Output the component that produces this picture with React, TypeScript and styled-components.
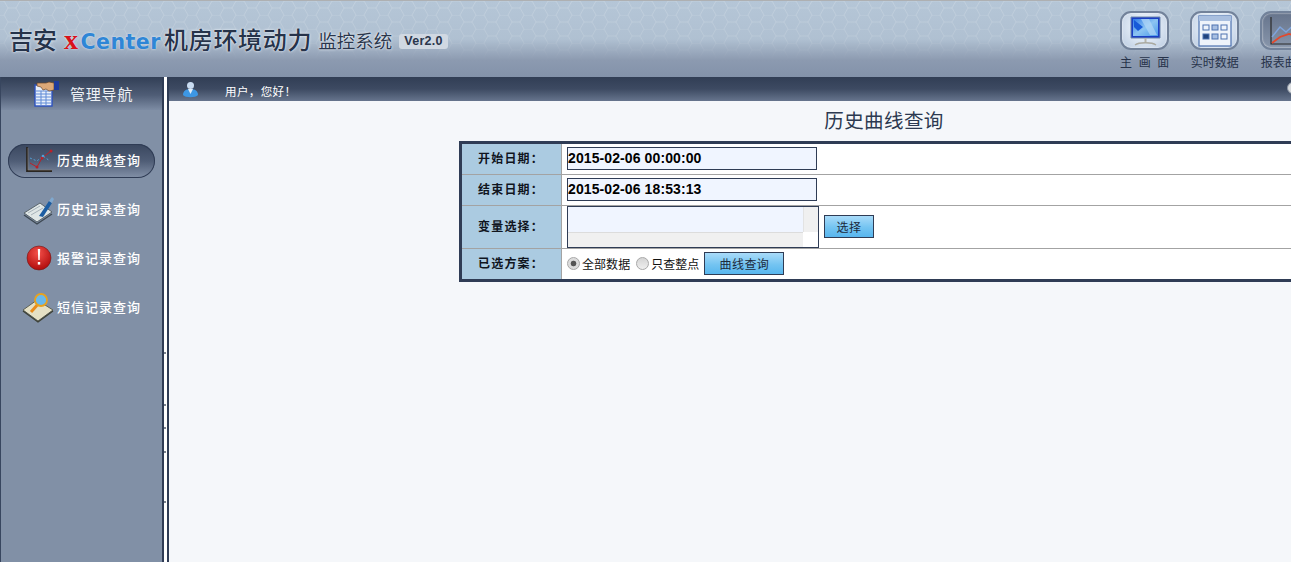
import styled, { createGlobalStyle } from "styled-components";

const hexTile = encodeURIComponent(
    `<svg xmlns="http://www.w3.org/2000/svg" width="24" height="14"><path d="M0 0l4 0 4 7 8 0 4-7 4 0M8 7l-4 7M16 7l4 7" fill="none" stroke="#ffffff" stroke-opacity=".17" stroke-width="1"/></svg>`
);

const GlobalStyle = createGlobalStyle`
    html, body {
        margin: 0;
        height: 100%;
        overflow: hidden;
        background: #f5f7fa;
    }
    body, input, button {
        font-family: "Liberation Sans", "Noto Sans CJK SC", sans-serif;
    }
`;

const Page = styled.div`
    width: 1291px;
    height: 562px;
    display: flex;
    flex-direction: column;
    overflow: hidden;
`;

const Header = styled.header`
    flex: 0 0 77px;
    box-sizing: border-box;
    border-top: 1px solid #aeb0b2;
    display: flex;
    justify-content: space-between;
    background:
        linear-gradient(180deg, rgba(181, 198, 214, 0) 0%, rgba(160, 176, 194, 0.25) 50%, #8c9ab0 78%, #8392aa 100%),
        url("data:image/svg+xml,${hexTile}"),
        #b5c6d7;
`;

const Brand = styled.div`
    display: flex;
    align-items: flex-start;
    padding: 22px 0 0 9px;
    color: #26334a;
    text-shadow: 0 0 3px #e8eef5, 0 0 1px #ffffff;
    white-space: nowrap;
`;

const BrandBig = styled.span<{ $spacing?: number }>`
    font-family: "Noto Sans CJK SC", sans-serif;
    font-size: 24px;
    font-weight: 500;
    line-height: 32px;
    letter-spacing: ${(p) => p.$spacing ?? 0}px;
`;

const Logo = styled.span`
    width: 100px;
    font-family: "DejaVu Sans", "Liberation Sans", sans-serif;
    font-size: 20.5px;
    font-weight: 700;
    line-height: 33px;
    margin: 0 0 0 7px;
    letter-spacing: 0.5px;
    color: #2f86d6;
    text-shadow: 0 0 2px #e8eef5;

    b {
        font-family: "Liberation Serif", serif;
        font-size: 28px;
        font-weight: 700;
        color: #d8121a;
        margin-right: 2px;
    }
`;

const SubTitle = styled.span`
    font-family: "Noto Sans CJK SC", sans-serif;
    font-size: 18.5px;
    line-height: 34px;
    margin-left: 6px;
    color: #2a364c;
`;

const Version = styled.span`
    margin: 11px 0 0 7px;
    padding: 0 5px;
    height: 15px;
    line-height: 15px;
    border-radius: 3px;
    background: #d0d8e2;
    color: #2a364c;
    font-size: 12.5px;
    font-weight: 700;
    letter-spacing: 0.3px;
    text-shadow: none;
`;

const Toolbar = styled.nav`
    display: flex;
    gap: 21px;
    padding: 10px 0 0 0;
    width: 171px;
    flex: 0 0 171px;
`;

const ToolItem = styled.div`
    flex: 0 0 49px;
    display: flex;
    flex-direction: column;
    align-items: center;
    gap: 6px;
    color: #27334a;
    font-size: 12px;
    line-height: 14px;
    white-space: nowrap;
`;

const ToolFace = styled.div<{ $active?: boolean }>`
    width: 49px;
    height: 39px;
    box-sizing: border-box;
    border-radius: 11px;
    border: 2px solid #72829a;
    display: flex;
    align-items: center;
    justify-content: center;
    background: ${(p) =>
        p.$active
            ? "linear-gradient(180deg, #66748c, #8896ab)"
            : "radial-gradient(ellipse at 50% 40%, #e8f0f9 30%, #b9cae0 100%)"};
    box-shadow: inset 0 0 2px #ffffff;
`;

const Body = styled.div`
    flex: 1;
    display: flex;
    min-height: 0;
`;

const Sidebar = styled.aside`
    flex: 0 0 164px;
    box-sizing: border-box;
    border-left: 1px solid #38465f;
    border-right: 2px solid #2f3c55;
    background: #8190a6;
    display: flex;
    flex-direction: column;
`;

const SideHead = styled.div`
    height: 33px;
    display: flex;
    align-items: center;
    gap: 10px;
    padding-left: 33px;
    color: #eef2f6;
    font-size: 15px;
    letter-spacing: 0.8px;
    background: linear-gradient(180deg, #323f56 0%, #4f5d76 55%, #7d8ca4 100%);
`;

const SideList = styled.ul`
    list-style: none;
    margin: 0;
    padding: 34px 0 0 7px;
    display: flex;
    flex-direction: column;
    gap: 15px;
`;

const SideItem = styled.li<{ $active?: boolean }>`
    width: 147px;
    height: 34px;
    box-sizing: border-box;
    padding-left: 14px;
    display: flex;
    align-items: center;
    gap: 3px;
    border-radius: 17px;
    color: #ffffff;
    font-size: 13px;
    font-weight: 500;
    letter-spacing: 1px;
    white-space: nowrap;
    ${(p) =>
        p.$active &&
        `
        background: linear-gradient(180deg, #3a475f 0%, #4f5d76 50%, #8391a8 100%);
        box-shadow: inset 0 0 0 1px #2f3c55;
    `}
`;

const SideText = styled.span`
    padding-bottom: 4px;
`;

const SideIcon = styled.svg`
    flex: 0 0 32px;
    width: 32px;
    height: 32px;
    margin-top: -3px;
`;

const Splitter = styled.div`
    flex: 0 0 3px;
    background: #ffffff;
    display: flex;
    flex-direction: column;
    padding-top: 275px;
`;

const Tick = styled.i<{ $top: number }>`
    display: block;
    width: 2px;
    height: 2px;
    margin-top: ${(p) => p.$top}px;
    background: #7c8490;
`;

const Main = styled.main`
    flex: 1;
    min-width: 0;
    box-sizing: border-box;
    border-left: 2px solid #2f3c55;
    display: flex;
    flex-direction: column;
    background: #f5f7fa;
    overflow: hidden;
`;

const UserBar = styled.div`
    flex: 0 0 24px;
    display: flex;
    align-items: center;
    padding-left: 14px;
    color: #ffffff;
    font-size: 11.5px;
    letter-spacing: 0.4px;
    background: linear-gradient(180deg, #313e55 0%, #3d4a62 50%, #66748d 100%);
    position: relative;
`;

const UserName = styled.span`
    margin-left: 27px;
    padding-top: 3px;
`;

const CloseDot = styled.span`
    position: absolute;
    left: 1118px;
    top: 5px;
    width: 10px;
    height: 10px;
    border-radius: 50%;
    background: #d9dcdf;
    border: 1px solid #8c95a3;
`;

const Content = styled.section`
    width: 1430px;
    display: flex;
    flex-direction: column;
    align-items: center;
`;

const Heading = styled.h1`
    margin: 5px 0 0;
    height: 35px;
    font-size: 19.5px;
    line-height: 28px;
    font-weight: 400;
    letter-spacing: 0.4px;
    color: #2c3950;
    font-family: "Noto Sans CJK SC", sans-serif;
`;

const QueryTable = styled.div`
    width: 850px;
    flex: 0 0 auto;
    box-sizing: border-box;
    border: 3px solid #2f3c55;
    background: #ffffff;
    display: flex;
    flex-direction: column;
`;

const Row = styled.div<{ $h: number; $last?: boolean }>`
    height: ${(p) => p.$h}px;
    display: flex;
    border-bottom: ${(p) => (p.$last ? "none" : "1px solid #a3a3a3")};
`;

const Label = styled.div`
    flex: 0 0 100px;
    border-right: 1px solid #a3a3a3;
    background: #abcbe1;
    display: flex;
    align-items: center;
    padding: 0 0 3px 16px;
    box-sizing: border-box;
    font-size: 12px;
    font-weight: 700;
    letter-spacing: 1.2px;
    color: #10151e;
`;

const Cell = styled.div<{ $flush?: boolean }>`
    flex: 1;
    display: flex;
    align-items: center;
    padding: 0 0 ${(p) => (p.$flush ? 0 : 2)}px 5px;
    font-size: 12px;
    color: #111;
`;

const DateInput = styled.input`
    width: 250px;
    height: 23px;
    box-sizing: border-box;
    border: 1px solid #2f3c55;
    background: #f0f5ff;
    padding: 0;
    font-family: "Liberation Sans", sans-serif;
    font-size: 14px;
    font-weight: 700;
    letter-spacing: 0.1px;
    color: #000;
    outline: none;
`;

const ListBox = styled.div`
    width: 252px;
    height: 42px;
    box-sizing: border-box;
    border: 1px solid #2f3c55;
    display: grid;
    grid-template-columns: 1fr 15px;
    grid-template-rows: 1fr 15px;
    background: #ffffff;
`;

const ListArea = styled.div`
    background: #f0f5ff;
`;

const ScrollTrack = styled.div`
    background: #f0f0f0;
    border-left: 1px solid #e3e3e3;
`;

const ScrollBottom = styled.div`
    background: #f0f0f0;
    border-top: 1px solid #dcdcdc;
`;

const BlueButton = styled.button<{ $w: number; $gap?: number; $lift?: number }>`
    width: ${(p) => p.$w}px;
    height: 23px;
    margin-left: ${(p) => p.$gap ?? 0}px;
    margin-bottom: ${(p) => p.$lift ?? 0}px;
    padding: 0;
    box-sizing: border-box;
    border: 1px solid #2f3c55;
    background: linear-gradient(180deg, #a9dbf9 0%, #74c4f1 55%, #58b6ee 100%);
    color: #1c2a3c;
    font-size: 12px;
    letter-spacing: 0.4px;
`;

const RadioGroup = styled.label`
    display: flex;
    align-items: center;
    gap: 2px;
    margin-right: 5px;
    color: #111;
    letter-spacing: 0.05px;

    & + & {
        margin-left: 1px;
    }
`;

const RadioDot = styled.span<{ $on?: boolean }>`
    width: 13px;
    height: 13px;
    box-sizing: border-box;
    border-radius: 50%;
    border: 1px solid #a8a8a8;
    background: ${(p) =>
        p.$on ? "radial-gradient(circle, #555 0 2.5px, #dcdcdc 3.2px)" : "linear-gradient(180deg, #d4d4d4, #efefef)"};
`;

const MonitorIcon = () => (
    <svg width="40" height="32" viewBox="0 0 40 32">
        <defs>
            <linearGradient id="screenFill" x1="0" y1="0" x2="1" y2="1">
                <stop offset="0" stopColor="#2f7be8" />
                <stop offset="0.5" stopColor="#8cc4f2" />
                <stop offset="1" stopColor="#4c9aea" />
            </linearGradient>
        </defs>
        <path d="M6 2h29v21H6z" fill="#1a3fc4" stroke="#6d86ab" />
        <path d="M8 4h25v17H8z" fill="url(#screenFill)" />
        <path d="M9 5l9 7-5 4-4-4z" fill="#1659d8" />
        <path d="M16 4h8l8 16h-7z" fill="#b3d8f6" fillOpacity=".7" />
        <path d="M10 30c4-3 17-3 21 0" fill="none" stroke="#a9a9a0" strokeWidth="1.4" />
        <path d="M19.500 23h2v4h-2z" fill="#b5b5ab" />
    </svg>
);

const GridIcon = () => (
    <svg width="34" height="32" viewBox="0 0 34 32">
        <rect x="1" y="1" width="32" height="30" fill="#eef3fa" stroke="#4d72b0" strokeWidth="1.2" />
        <rect x="1" y="1" width="32" height="5" fill="#a9bfdf" />
        {[0, 1, 2].map((c) =>
            [0, 1].map((r) => (
                <rect
                    key={`${c}${r}`}
                    x={5 + c * 9}
                    y={10 + r * 9}
                    width="6"
                    height="5"
                    fill={c === 0 && r === 1 ? "#21447e" : c === 1 ? "#a8bfe2" : "#eef3fa"}
                    stroke="#4d72b0"
                />
            ))
        )}
    </svg>
);

const ChartIcon = () => (
    <svg width="36" height="32" viewBox="0 0 36 32">
        <path d="M4 2v27h30" fill="none" stroke="#2b2b2b" strokeWidth="1.2" />
        <path d="M5 22l8-10 6 5 9-8 6 3" fill="none" stroke="#7fa4dc" strokeWidth="1.5" />
        <path d="M5 28l8-6 9-3 12 3" fill="none" stroke="#e2492d" strokeWidth="1.8" />
    </svg>
);

const GuideIcon = () => (
    <svg width="26" height="27" viewBox="0 0 26 27">
        <rect x="1" y="5" width="17" height="21" fill="#e9f0fb" stroke="#2b52c0" strokeWidth="1.4" />
        {[11, 14, 17, 20, 23].map((y) => (
            <path key={y} d="M2 0h15" transform={`translate(0 ${y})`} stroke="#5f8ad6" strokeWidth="1" />
        ))}
        <path d="M7 11v15M12 11v15" stroke="#5f8ad6" strokeWidth="1" />
        <path d="M3 3h9l3-1 5 1v7l-5 1-3-2-3 1-2-3-4-1z" fill="#dca878" stroke="#6a4528" strokeWidth=".7" />
        <rect x="20" y="1" width="5" height="9" fill="#1f3a9c" />
    </svg>
);

const UserIcon = () => (
    <svg width="15" height="17" viewBox="0 0 15 17">
        <circle cx="7.5" cy="4.5" r="3.5" fill="#c9dcf2" />
        <path d="M0 14c0-4 3-6 7.5-6s7.5 2 7.5 6c-2 3-13 3-15 0z" fill="#3d97e4" />
        <path d="M5 8h5l-2.500 5z" fill="#e3eef9" />
    </svg>
);

const CurveIcon = () => (
    <SideIcon viewBox="0 0 32 32">
        <path d="M5 3v24h25" fill="none" stroke="#2a2622" strokeWidth="1.8" />
        <path d="M6 4v22h24" fill="none" stroke="#8b8276" strokeWidth=".6" />
        <path d="M8 19l7 4 5-9 9-7" fill="none" stroke="#b8222a" strokeWidth="1" />
        <path d="M8 14l7 3 6-5 7 5" fill="none" stroke="#4f9fd6" strokeWidth="1" strokeDasharray="2 2" />
        <circle cx="15" cy="23" r="1.5" fill="#b8222a" />
        <circle cx="20" cy="14" r="1.5" fill="#b8222a" />
        <circle cx="29" cy="7" r="1.5" fill="#b8222a" />
        <circle cx="21" cy="12" r="1.3" fill="#4f9fd6" />
    </SideIcon>
);

const RecordIcon = () => (
    <SideIcon viewBox="0 0 32 32">
        <path d="M2 20L18 10l12 9-15 10z" fill="#dfe6e6" stroke="#59646c" />
        <path d="M2 22l13 9 15-10" fill="none" stroke="#3d4852" strokeWidth="1.4" />
        <path d="M6 20l12-7M9 22l12-7" stroke="#98a4ad" strokeWidth=".8" />
        <path d="M17 23l10-15 3 2-9 14z" fill="#1c5da2" />
        <path d="M27 8l3-4 2 2-2 4z" fill="#7fa8cf" />
    </SideIcon>
);

const AlarmIcon = () => (
    <SideIcon viewBox="0 0 32 32">
        <defs>
            <radialGradient id="alarmFill" cx="45%" cy="30%" r="70%">
                <stop offset="0" stopColor="#f4504a" />
                <stop offset="1" stopColor="#b00c0c" />
            </radialGradient>
        </defs>
        <circle cx="17" cy="16" r="12" fill="url(#alarmFill)" stroke="#6f1a1a" strokeWidth=".6" />
        <path d="M15.8 7h2.400l-.5 11h-1.400z" fill="#ffffff" />
        <rect x="15.8" y="20" width="2.4" height="2.6" fill="#ffffff" />
    </SideIcon>
);

const SmsIcon = () => (
    <SideIcon viewBox="0 0 32 32">
        <path d="M1 19L15 9l16 10-15 11z" fill="#e5e0c4" stroke="#5f6256" />
        <path d="M1 20l15 11 15-11" fill="none" stroke="#3d4036" strokeWidth="1.3" />
        <path d="M9 21l8-9" stroke="#e88c1c" strokeWidth="3" />
        <circle cx="19" cy="9" r="6" fill="#69b9ec" stroke="#e8a21e" strokeWidth="1.8" />
    </SideIcon>
);

const menu = [
    { text: "历史曲线查询", icon: <CurveIcon />, active: true },
    { text: "历史记录查询", icon: <RecordIcon /> },
    { text: "报警记录查询", icon: <AlarmIcon /> },
    { text: "短信记录查询", icon: <SmsIcon /> },
];

export default function App() {
    return (
        <Page>
            <GlobalStyle />
            <Header>
                <Brand>
                    <BrandBig>吉安</BrandBig>
                    <Logo>
                        <b>x</b>Center
                    </Logo>
                    <BrandBig $spacing={0.7}>机房环境动力</BrandBig>
                    <SubTitle>监控系统</SubTitle>
                    <Version>Ver2.0</Version>
                </Brand>
                <Toolbar>
                    <ToolItem>
                        <ToolFace>
                            <MonitorIcon />
                        </ToolFace>
                        主&nbsp;&nbsp;画&nbsp;&nbsp;面
                    </ToolItem>
                    <ToolItem>
                        <ToolFace>
                            <GridIcon />
                        </ToolFace>
                        实时数据
                    </ToolItem>
                    <ToolItem>
                        <ToolFace $active>
                            <ChartIcon />
                        </ToolFace>
                        报表曲线
                    </ToolItem>
                </Toolbar>
            </Header>
            <Body>
                <Sidebar>
                    <SideHead>
                        <GuideIcon />
                        管理导航
                    </SideHead>
                    <SideList>
                        {menu.map((m) => (
                            <SideItem key={m.text} $active={m.active}>
                                {m.icon}
                                <SideText>{m.text}</SideText>
                            </SideItem>
                        ))}
                    </SideList>
                </Sidebar>
                <Splitter>
                    <Tick $top={0} />
                    <Tick $top={50} />
                    <Tick $top={21} />
                    <Tick $top={22} />
                    <Tick $top={48} />
                </Splitter>
                <Main>
                    <UserBar>
                        <UserIcon />
                        <UserName>用户，您好！</UserName>
                        <CloseDot />
                    </UserBar>
                    <Content>
                        <Heading>历史曲线查询</Heading>
                        <QueryTable>
                            <Row $h={30}>
                                <Label>开始日期：</Label>
                                <Cell>
                                    <DateInput readOnly value="2015-02-06 00:00:00" />
                                </Cell>
                            </Row>
                            <Row $h={30}>
                                <Label>结束日期：</Label>
                                <Cell>
                                    <DateInput readOnly value="2015-02-06 18:53:13" />
                                </Cell>
                            </Row>
                            <Row $h={42}>
                                <Label>变量选择：</Label>
                                <Cell $flush>
                                    <ListBox>
                                        <ListArea />
                                        <ScrollTrack />
                                        <ScrollBottom />
                                    </ListBox>
                                    <BlueButton $w={50} $gap={5} $lift={2}>
                                        选择
                                    </BlueButton>
                                </Cell>
                            </Row>
                            <Row $h={30} $last>
                                <Label>已选方案：</Label>
                                <Cell>
                                    <RadioGroup>
                                        <RadioDot $on />
                                        全部数据
                                    </RadioGroup>
                                    <RadioGroup>
                                        <RadioDot />
                                        只查整点
                                    </RadioGroup>
                                    <BlueButton $w={80}>曲线查询</BlueButton>
                                </Cell>
                            </Row>
                        </QueryTable>
                    </Content>
                </Main>
            </Body>
        </Page>
    );
}
